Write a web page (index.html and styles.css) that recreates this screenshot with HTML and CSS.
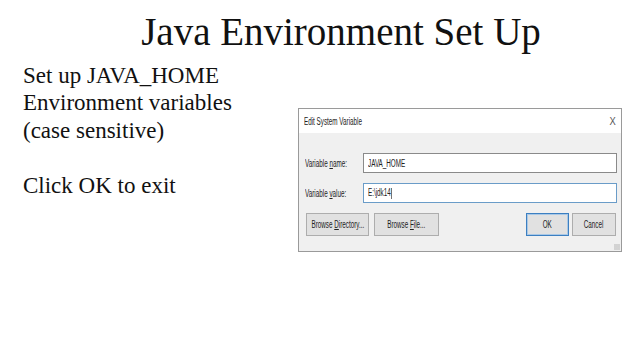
FILE: index.html
```html
<!DOCTYPE html>
<html>
<head>
<meta charset="utf-8">
<link rel="stylesheet" href="styles.css">
</head>
<body>
<div class="slide">
  <h1 class="title">Java Environment Set Up</h1>
  <div class="content">
    <div class="notes">
      <p>Set up JAVA_HOME</p>
      <p>Environment variables</p>
      <p>(case sensitive)</p>
      <p>&nbsp;</p>
      <p>Click OK to exit</p>
    </div>
    <div class="dialog">
      <div class="dlg-title">
        <span class="sq">Edit System Variable</span>
        <span class="close">X</span>
      </div>
      <div class="dlg-body">
        <div class="row">
          <span class="label"><span class="sq">Variable <u>n</u>ame:</span></span>
          <div class="input"><span class="sq">JAVA_HOME</span></div>
        </div>
        <div class="row">
          <span class="label"><span class="sq">Variable <u>v</u>alue:</span></span>
          <div class="input focus"><span class="sq">E:\jdk14<span class="caret"></span></span></div>
        </div>
        <div class="buttons">
          <div class="btn w63"><span class="sq c">Browse <u>D</u>irectory...</span></div>
          <div class="btn w65"><span class="sq c">Browse <u>F</u>ile...</span></div>
          <div class="spacer"></div>
          <div class="btn ok"><span class="sq c">OK</span></div>
          <div class="btn cancel"><span class="sq c">Cancel</span></div>
        </div>
        <div class="grip"></div>
      </div>
    </div>
  </div>
</div>
</body>
</html>
```
FILE: styles.css
```css
html, body { margin: 0; padding: 0; background: #fff; }
.slide { width: 640px; height: 360px; overflow: hidden; color: #111; }
.title {
  margin: 0;
  padding: 7px 0 0 42px;
  height: 49px;
  font: 400 39px/50px "Liberation Serif", "Times New Roman", serif;
  text-align: center;
  color: #111;
}
.content { display: flex; }
.notes {
  width: 298px;
  flex: none;
  box-sizing: border-box;
  padding-left: 23px;
  margin-top: 6px;
  font: 400 23px/27.4px "Liberation Serif", "Times New Roman", serif;
}
.notes p { margin: 0; white-space: nowrap; }
.dialog {
  margin-top: 52px;
  width: 324px;
  flex: none;
  height: 144px;
  box-sizing: border-box;
  border: 1px solid #9a9a9a;
  background: #f0f0f0;
  font: 400 10px "Liberation Sans", Arial, sans-serif;
  color: #222;
  display: flex;
  flex-direction: column;
}
.sq {
  display: inline-block;
  white-space: nowrap;
  transform: scaleX(0.63);
  transform-origin: left center;
}
.sq.c { transform-origin: center center; }
.sq u { text-decoration: underline; }
.dlg-title {
  height: 24px;
  background: #fff;
  display: flex;
  align-items: center;
  justify-content: space-between;
  padding: 0 5px 0 5px;
}
.close { font-size: 11px; color: #555; font-family: "Liberation Sans", sans-serif; transform: scaleX(0.85); }
.dlg-body {
  flex: 1;
  padding: 20px 4px 0 6px;
  position: relative;
}
.row { display: flex; align-items: center; margin-bottom: 10px; height: 20px; }
.label { width: 58px; flex: none; white-space: nowrap; }
.input {
  flex: 1;
  height: 20px;
  box-sizing: border-box;
  border: 1px solid #8a8a8a;
  background: #fff;
  display: flex;
  align-items: center;
  padding-left: 4px;
}
.input.focus { border-color: #6a9cc8; }
.caret { display: inline-block; width: 1px; height: 11px; background: #222; margin-left: 1px; vertical-align: middle; }
.buttons { display: flex; align-items: center; margin-top: 4px; height: 23px; padding-left: 1px; }
.btn {
  height: 23px;
  box-sizing: border-box;
  border: 1px solid #adadad;
  background: #e1e1e1;
  display: flex;
  align-items: center;
  justify-content: center;
  margin-right: 5px;
  white-space: nowrap;
}
.w63 { width: 63px; }
.w65 { width: 65px; }
.spacer { flex: 1; }
.ok { width: 43px; border: 1px solid #3c7fc1; box-shadow: inset 0 0 0 1px #a9c8e6; margin-right: 3px; }
.cancel { width: 44px; margin-right: 1px; }
.grip {
  position: absolute;
  right: 1px;
  bottom: 1px;
  width: 6px;
  height: 6px;
  background: radial-gradient(circle, #b0b0b0 0.6px, transparent 0.8px) 0 0 / 2px 2px;
}
```
